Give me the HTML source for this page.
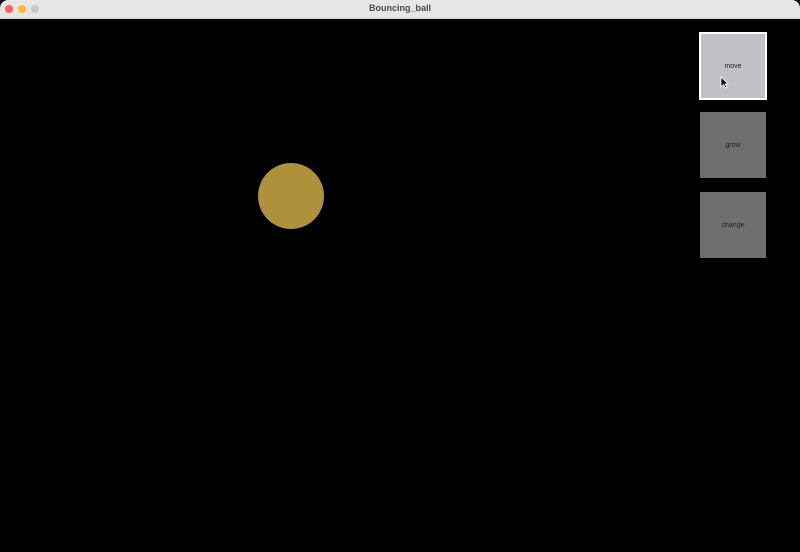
<!DOCTYPE html>
<html><head><style>
body{margin:0;width:800px;height:552px;background:#000;overflow:hidden;font-family:"Liberation Sans",sans-serif;position:relative}
.bar{position:absolute;left:0;top:0;width:800px;height:18px;background:#e8e6e4;border-bottom:1px solid #cfcdcb;border-radius:8px 8px 0 0}
.bar .t{position:absolute;width:100%;text-align:center;top:3px;font-size:9px;font-weight:bold;color:#4a4a4a}
.dot{position:absolute;top:5px;width:8px;height:8px;border-radius:50%}
.btn{position:absolute;left:700px;width:66px;height:66px;background:#6f6e71;font-size:7px;color:#222;display:flex;align-items:center;justify-content:center;box-sizing:border-box}
.ball{position:absolute;left:258px;top:163px;width:66px;height:66px;border-radius:50%;background:#ae913a}
</style></head><body>
<div class="bar"><div class="dot" style="left:5px;background:#fd5f57"></div><div class="dot" style="left:18px;background:#febb2e"></div><div class="dot" style="left:31px;background:#c9c7c5"></div><div class="t">Bouncing_ball</div></div>
<div class="ball"></div>
<div class="btn" style="top:32px;width:68px;height:68px;left:699px;background:#c2c0c4;border:2px solid #fff">move</div>
<svg style="position:absolute;left:720px;top:76px" width="9" height="13" viewBox="0 0 9 13"><path d="M1 1 L1 11 L3.5 8.5 L5.5 12 L7 11.3 L5 8 L8 8 Z" fill="#000" stroke="#fff" stroke-width="0.8"/></svg>
<div class="btn" style="top:112px">grow</div>
<div class="btn" style="top:192px">change</div>
</body></html>
